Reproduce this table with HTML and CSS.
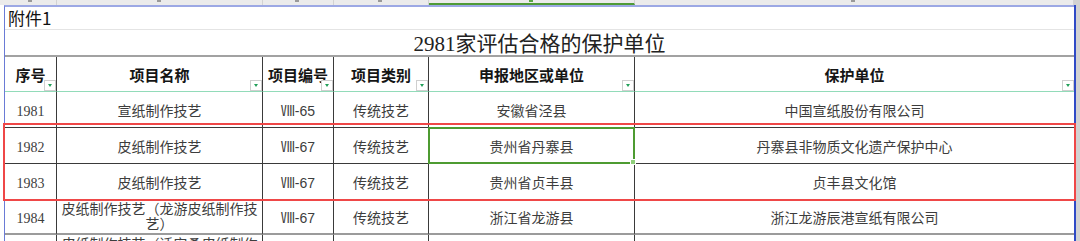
FILE: index.html
```html
<!DOCTYPE html>
<html lang="zh-CN">
<head>
<meta charset="utf-8">
<title>附件1</title>
<link rel="stylesheet" href="styles.css">
</head>
<body>
<div class="colbar">
  <div class="cb-lead"></div>
  <div class="cb"></div>
  <div class="cb"></div>
  <div class="cb"></div>
  <div class="cb"></div>
  <div class="cb cb-sel"></div>
  <div class="cb"></div>
  <div class="cb-tail"></div>
</div>
<div class="frame">
  <div class="gutter"></div>
  <div class="sheet">
    <div class="cell att">附件1</div>
    <div class="cell title">2981家评估合格的保护单位</div>

    <div class="cell hd">序号<span class="flt"></span></div>
    <div class="cell hd">项目名称<span class="flt"></span></div>
    <div class="cell hd hd-tight">项目编号<span class="flt"></span></div>
    <div class="cell hd">项目类别<span class="flt"></span></div>
    <div class="cell hd">申报地区或单位<span class="flt"></span></div>
    <div class="cell hd last">保护单位<span class="flt"></span></div>

    <div class="cell d">1981</div>
    <div class="cell d">宣纸制作技艺</div>
    <div class="cell d code">Ⅷ-65</div>
    <div class="cell d">传统技艺</div>
    <div class="cell d">安徽省泾县</div>
    <div class="cell d last">中国宣纸股份有限公司</div>

    <div class="cell d">1982</div>
    <div class="cell d">皮纸制作技艺</div>
    <div class="cell d code">Ⅷ-67</div>
    <div class="cell d">传统技艺</div>
    <div class="cell d">贵州省丹寨县</div>
    <div class="cell d last">丹寨县非物质文化遗产保护中心</div>

    <div class="cell d">1983</div>
    <div class="cell d">皮纸制作技艺</div>
    <div class="cell d code">Ⅷ-67</div>
    <div class="cell d">传统技艺</div>
    <div class="cell d">贵州省贞丰县</div>
    <div class="cell d last">贞丰县文化馆</div>

    <div class="cell d gb">1984</div>
    <div class="cell d gb wrap">皮纸制作技艺（龙游皮纸制作技艺）</div>
    <div class="cell d gb code">Ⅷ-67</div>
    <div class="cell d gb">传统技艺</div>
    <div class="cell d gb">浙江省龙游县</div>
    <div class="cell d gb last">浙江龙游辰港宣纸有限公司</div>

    <div class="cell d">1985</div>
    <div class="cell d wrap">皮纸制作技艺（迁安桑皮纸制作技艺）</div>
    <div class="cell d code">Ⅷ-67</div>
    <div class="cell d">传统技艺</div>
    <div class="cell d">河北省迁安市</div>
    <div class="cell d last">迁安市文化馆</div>
  </div>
  <div class="edge"></div>
</div>
<div class="redbox"></div>
<div class="sel"><span class="handle"></span></div>
</body>
</html>
```

FILE: styles.css
```css
html, body {
  margin: 0;
  padding: 0;
  background: #ffffff;
}
body {
  width: 1080px;
  height: 241px;
  overflow: hidden;
  position: relative;
}

/* column header strip (mostly scrolled off) */
.colbar {
  display: grid;
  grid-template-columns: 5px 52px 206px 71px 95px 206px 439px 6px;
  height: 5px;
  background: #ebebeb;
  overflow: hidden;
}
.cb {
  box-sizing: border-box;
  height: 5px;
  position: relative;
  border-right: 1px solid #d3d3d3;
}
.cb::after {
  content: "";
  position: absolute;
  left: 50%;
  top: 0;
  width: 4px;
  height: 2px;
  margin-left: -3px;
  background: #9a9a9a;
}
.cb-sel {
  border-bottom: 2px solid #4f9a37;
}
.cb-sel::after {
  background: #5aa645;
}
.cb-tail {
  background: #d2d2d2;
}

/* sheet frame */
.frame {
  display: flex;
  height: 236px;
}
.gutter {
  width: 4px;
  flex: none;
}
.sheet {
  flex: none;
  width: 1069px;
  border-left: 1px solid #6a7bd6;
  border-top: 2px solid #9ca8e4;
  display: grid;
  grid-template-columns: 52px 206px 71px 95px 206px 439px;
  grid-template-rows: 23px 27px 35px 36px 36px 37px 34px 34px;
}
.edge {
  flex: none;
  width: 4px;
  border-left: 2px solid #2f4ac6;
  background: #d2d2d2;
}

.cell {
  box-sizing: border-box;
  display: flex;
  align-items: center;
  justify-content: center;
  text-align: center;
  border-right: 1px solid #3a3a3a;
  border-bottom: 1px solid #3a3a3a;
  min-width: 0;
}
.cell.last {
  border-right: none;
}

.att {
  grid-column: 1 / -1;
  border-right: none;
  border-bottom: 1px solid #e4e4e4;
  justify-content: flex-start;
  padding-left: 3px;
  font: 17px/20px "Noto Sans CJK SC", sans-serif;
  color: #111;
}
.title {
  grid-column: 1 / -1;
  border-right: none;
  border-bottom: 2px solid #a2a2a2;
  padding-top: 2px;
  font: 21px/24px "Liberation Serif", "Noto Sans CJK SC", serif;
  color: #222;
}

.hd {
  position: relative;
  border-bottom: 1px solid #92dbb9;
  padding-top: 2px;
  font: bold 15px/18px "Noto Sans CJK SC", sans-serif;
  color: #151515;
  white-space: nowrap;
}
.hd-tight {
  justify-content: flex-start;
  padding-left: 5px;
}
.flt {
  position: absolute;
  right: 0;
  bottom: 0;
  width: 12px;
  height: 11px;
  box-sizing: border-box;
  border: 1px solid #cfcfcf;
  background: #ffffff;
}
.flt::after {
  content: "";
  position: absolute;
  left: 3px;
  top: 3px;
  border-left: 2.5px solid transparent;
  border-right: 2.5px solid transparent;
  border-top: 3px solid #23a05a;
}

.d {
  padding: 3px 2px 0;
  font: 14px/15px "Liberation Serif", "Noto Sans CJK SC", serif;
  color: #3d3d3d;
}
.code {
  font-family: "Liberation Sans", "Noto Sans CJK SC", sans-serif;
}
.wrap {
  padding-top: 0;
}
.gb {
  border-bottom: 2px solid #9b9b9b;
}

/* overlays */
.redbox {
  position: absolute;
  left: 3px;
  top: 123px;
  width: 1073px;
  height: 78px;
  box-sizing: border-box;
  border: 2px solid #ef4747;
}
.sel {
  position: absolute;
  left: 428px;
  top: 127px;
  width: 207px;
  height: 37px;
  box-sizing: border-box;
  border: 2px solid #4d9b31;
}
.handle {
  position: absolute;
  right: -3px;
  bottom: -3px;
  width: 4px;
  height: 4px;
  background: #8fcf7a;
  border: 1px solid #ffffff;
}
```
